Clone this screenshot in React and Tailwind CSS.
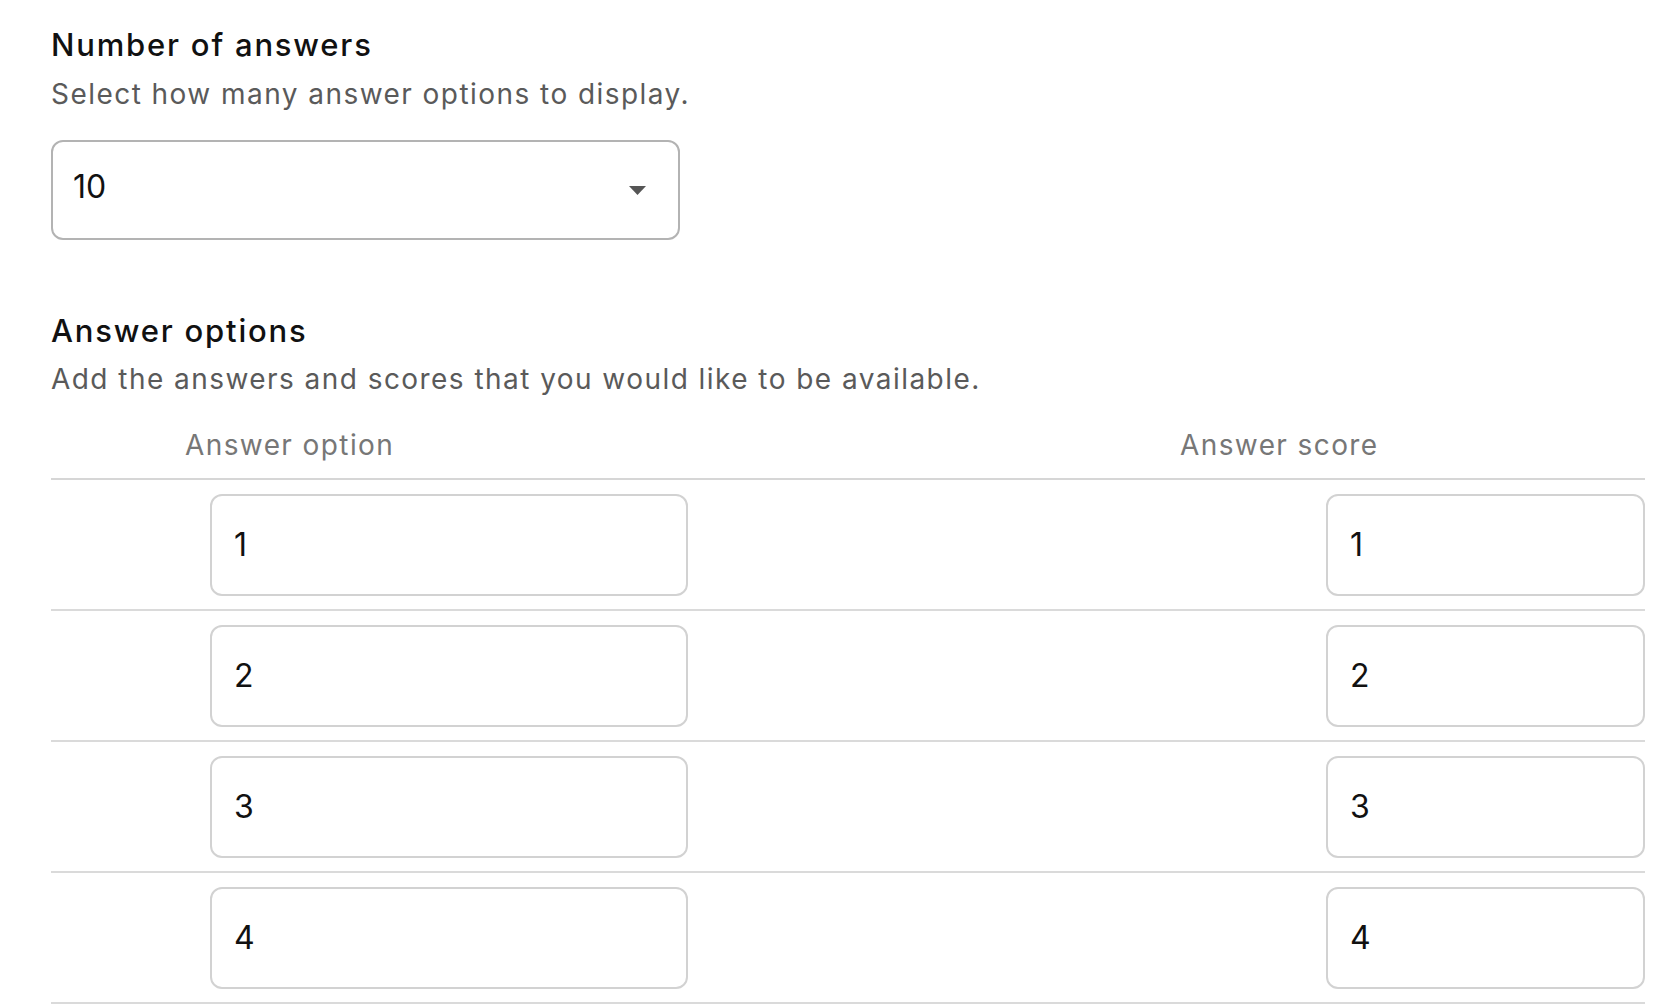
import React from "react";

const font = { fontFamily: "Inter, 'Noto Sans', sans-serif" };

function Row({ value }) {
  return (
    <div className="flex items-center h-[131px] border-b-2 border-[#dadada]">
      <div className="ml-[159px] w-[478px] h-[102px] rounded-[12px] border-2 border-[#d2d2d2] flex items-center pl-[22px] text-[32px] text-[#111]">
        {value}
      </div>
      <div className="ml-auto w-[319px] h-[102px] rounded-[12px] border-2 border-[#d2d2d2] flex items-center pl-[22px] text-[32px] text-[#111]">
        {value}
      </div>
    </div>
  );
}

export default function App() {
  return (
    <div className="w-[1657px] h-[1004px] overflow-hidden bg-white" style={font}>
      <div className="pl-[51px] pr-[12px] pt-[25px]">
        <div className="text-[31px] leading-[40px] font-medium tracking-[1.8px] text-[#111]">Number of answers</div>
        <div className="mt-[9px] text-[28px] leading-[40px] tracking-[1.45px] text-[#5a5a5a]">
          Select how many answer options to display.
        </div>
        <div className="mt-[26px] w-[629px] h-[100px] rounded-[12px] border-2 border-[#b3b3b3] flex items-center pl-[20px] pr-[32px]">
          <span className="text-[32px] text-[#111] -mt-[6px]">10</span>
          <svg className="ml-auto" width="17" height="9" viewBox="0 0 17 9">
            <path d="M0 0 L17 0 L8.5 9 Z" fill="#555" />
          </svg>
        </div>
        <div className="mt-[71px] text-[31px] leading-[40px] font-medium tracking-[1.8px] text-[#111]">Answer options</div>
        <div className="mt-[8px] text-[28px] leading-[40px] tracking-[1.45px] text-[#5a5a5a]">
          Add the answers and scores that you would like to be available.
        </div>
        <div className="mt-[26px] flex border-b-2 border-[#d6d6d6] pb-[13px] text-[28px] leading-[40px] tracking-[1.4px] text-[#777]">
          <span className="ml-[134px] w-[995px]">Answer option</span>
          <span>Answer score</span>
        </div>
        {[1, 2, 3, 4].map((v) => (
          <Row key={v} value={v} />
        ))}
      </div>
    </div>
  );
}
